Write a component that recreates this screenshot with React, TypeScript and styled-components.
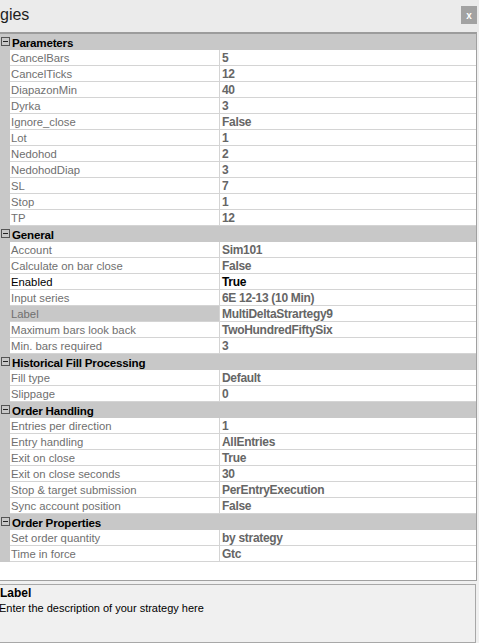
import React from "react";
import styled, { createGlobalStyle } from "styled-components";

type Prop = { name: string; value: string; active?: boolean; selected?: boolean };
type Category = { title: string; props: Prop[] };

const categories: Category[] = [
    {
        title: "Parameters",
        props: [
            { name: "CancelBars", value: "5" },
            { name: "CancelTicks", value: "12" },
            { name: "DiapazonMin", value: "40" },
            { name: "Dyrka", value: "3" },
            { name: "Ignore_close", value: "False" },
            { name: "Lot", value: "1" },
            { name: "Nedohod", value: "2" },
            { name: "NedohodDiap", value: "3" },
            { name: "SL", value: "7" },
            { name: "Stop", value: "1" },
            { name: "TP", value: "12" },
        ],
    },
    {
        title: "General",
        props: [
            { name: "Account", value: "Sim101" },
            { name: "Calculate on bar close", value: "False" },
            { name: "Enabled", value: "True", active: true },
            { name: "Input series", value: "6E 12-13 (10 Min)" },
            { name: "Label", value: "MultiDeltaStrartegy9", selected: true },
            { name: "Maximum bars look back", value: "TwoHundredFiftySix" },
            { name: "Min. bars required", value: "3" },
        ],
    },
    {
        title: "Historical Fill Processing",
        props: [
            { name: "Fill type", value: "Default" },
            { name: "Slippage", value: "0" },
        ],
    },
    {
        title: "Order Handling",
        props: [
            { name: "Entries per direction", value: "1" },
            { name: "Entry handling", value: "AllEntries" },
            { name: "Exit on close", value: "True" },
            { name: "Exit on close seconds", value: "30" },
            { name: "Stop & target submission", value: "PerEntryExecution" },
            { name: "Sync account position", value: "False" },
        ],
    },
    {
        title: "Order Properties",
        props: [
            { name: "Set order quantity", value: "by strategy" },
            { name: "Time in force", value: "Gtc" },
        ],
    },
];

export default function App() {
    return (
        <>
            <GlobalStyle />
            <Window>
                <TitleBar>
                    <Title>gies</Title>
                    <CloseButton>x</CloseButton>
                </TitleBar>
                <Grid>
                    {categories.map((cat) => (
                        <React.Fragment key={cat.title}>
                            <CategoryRow>
                                <Toggle />
                                <CategoryTitle>{cat.title}</CategoryTitle>
                            </CategoryRow>
                            {cat.props.map((p) => (
                                <PropRow key={p.name}>
                                    <Gutter />
                                    <NameCell $active={p.active} $selected={p.selected}>
                                        {p.name}
                                    </NameCell>
                                    <ValueCell $active={p.active}>{p.value}</ValueCell>
                                </PropRow>
                            ))}
                        </React.Fragment>
                    ))}
                    <Filler />
                </Grid>
                <HelpPanel>
                    <HelpTitle>Label</HelpTitle>
                    <HelpText>Enter the description of your strategy here</HelpText>
                </HelpPanel>
            </Window>
        </>
    );
}

const GlobalStyle = createGlobalStyle`
  body {
    margin: 0;
    background: #f0f0f0;
    font-family: "Liberation Sans", Arial, sans-serif;
  }
`;

const Window = styled.div`
    width: 479px;
    height: 643px;
    display: flex;
    flex-direction: column;
    background: #f0f0f0;
    overflow: hidden;
`;

const TitleBar = styled.div`
    height: 32px;
    display: flex;
    align-items: center;
    justify-content: space-between;
    background: #ebebeb;
    padding-right: 2px;
`;

const Title = styled.span`
    font-size: 16px;
    color: #1e1e1e;
    margin-top: -1px;
`;

const CloseButton = styled.div`
    width: 16px;
    height: 18px;
    background: #a2a2a2;
    color: #fff;
    font-size: 10px;
    font-weight: bold;
    display: flex;
    align-items: center;
    justify-content: center;
    margin-top: -1px;
`;

const Grid = styled.div`
    width: 476px;
    height: 547px;
    background: #fff;
    border-top: 2px solid #9c9c9c;
    border-right: 1px solid #a0a0a0;
    border-bottom: 1px solid #a0a0a0;
    display: flex;
    flex-direction: column;
    font-size: 11.3px;
`;

const CategoryRow = styled.div`
    height: 16px;
    flex: none;
    display: flex;
    align-items: center;
    background: #c8c8c8;
`;

const Toggle = styled.span`
    position: relative;
    box-sizing: border-box;
    width: 9px;
    height: 9px;
    margin: 0 2px 0 1px;
    border: 1px solid #555;
    flex: none;

    &::after {
        content: "";
        position: absolute;
        left: 1px;
        right: 1px;
        top: 3px;
        height: 1px;
        background: #222;
    }
`;

const CategoryTitle = styled.span`
    font-size: 11.6px;
    font-weight: bold;
    color: #000;
    letter-spacing: -0.2px;
    padding-top: 2px;
`;

const PropRow = styled.div`
    height: 16px;
    flex: none;
    display: grid;
    grid-template-columns: 10px 210px 1fr;
`;

const Gutter = styled.div`
    background: #c8c8c8;
`;

const NameCell = styled.div<{ $active?: boolean; $selected?: boolean }>`
    box-sizing: border-box;
    padding: 1px 0 0 1px;
    line-height: 14px;
    border-bottom: 1px solid #d4d4d4;
    border-right: 1px solid #d4d4d4;
    color: ${(p) => (p.$active ? "#000" : "#6f6f6f")};
    background: ${(p) => (p.$selected ? "#c8c8c8" : "#fff")};
    white-space: nowrap;
    overflow: hidden;
`;

const ValueCell = styled.div<{ $active?: boolean }>`
    box-sizing: border-box;
    padding: 1px 0 0 2px;
    line-height: 14px;
    border-bottom: 1px solid #d4d4d4;
    font-size: 12px;
    font-weight: bold;
    letter-spacing: -0.3px;
    color: ${(p) => (p.$active ? "#000" : "#666")};
    white-space: nowrap;
    overflow: hidden;
`;

const Filler = styled.div`
    flex: 1;
`;

const HelpPanel = styled.div`
    margin-top: 3px;
    width: 476px;
    height: 59px;
    box-sizing: border-box;
    border: 1px solid #a8a8a8;
    border-left: none;
    background: #f0f0f0;
    font-size: 11px;
    color: #000;
`;

const HelpTitle = styled.div`
    font-size: 12px;
    font-weight: bold;
    line-height: 15px;
    margin-top: 1px;
`;

const HelpText = styled.div`
    line-height: 15px;
    margin-left: -1px;
`;
